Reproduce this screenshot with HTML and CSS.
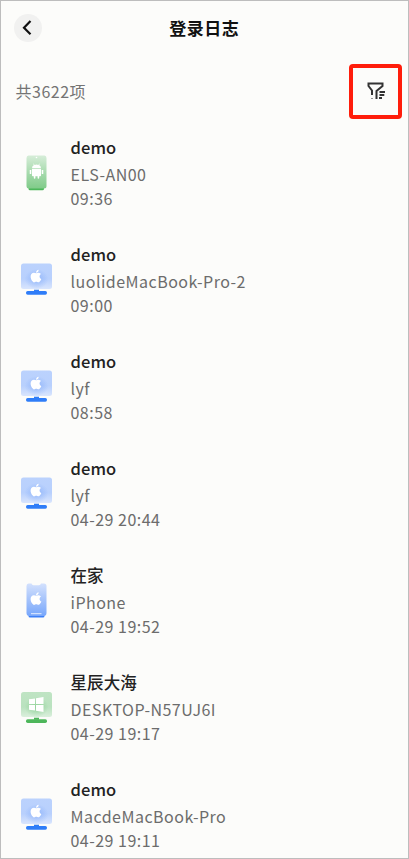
FILE: index.html
```
<!DOCTYPE html>
<html lang="zh-CN"><head><meta charset="utf-8"><title>登录日志</title><link rel="stylesheet" href="styles.css"></head>
<body>
<svg class="defs" width="0" height="0"><defs>
<linearGradient id="gb" x1="0" y1="0" x2="0" y2="1"><stop offset="0" stop-color="#bbd2fd"/><stop offset=".6" stop-color="#b8d0fd"/><stop offset="1" stop-color="#d9e5fd"/></linearGradient>
<linearGradient id="gs" x1="0" y1="0" x2="0" y2="1"><stop offset="0" stop-color="#bfe4c3"/><stop offset=".6" stop-color="#bae2bf"/><stop offset="1" stop-color="#daefdc"/></linearGradient>
<linearGradient id="gp" x1="0" y1="0" x2="0" y2="1"><stop offset="0" stop-color="#d3e1fd"/><stop offset=".5" stop-color="#a5c3fb"/><stop offset="1" stop-color="#78a7fb"/></linearGradient>
<linearGradient id="gg" x1="0" y1="0" x2="0" y2="1"><stop offset="0" stop-color="#d6edd8"/><stop offset=".5" stop-color="#a9dbaf"/><stop offset="1" stop-color="#80cb89"/></linearGradient>
<radialGradient id="glowb"><stop offset="0" stop-color="#7fa9f9" stop-opacity=".65"/><stop offset="1" stop-color="#7fa9f9" stop-opacity="0"/></radialGradient>
<radialGradient id="glowg"><stop offset="0" stop-color="#7cca85" stop-opacity=".65"/><stop offset="1" stop-color="#7cca85" stop-opacity="0"/></radialGradient>
<symbol id="apple" viewBox="0 0 24 24"><path d="M17.05 20.28c-.98.95-2.05.8-3.08.35-1.09-.46-2.09-.48-3.24 0-1.44.62-2.2.44-3.06-.35C2.79 15.25 3.51 7.59 9.05 7.31c1.35.07 2.29.74 3.08.8 1.18-.24 2.31-.93 3.57-.84 1.51.12 2.65.72 3.4 1.8-3.12 1.87-2.38 5.98.48 7.13-.57 1.5-1.31 2.99-2.54 4.09zM12.03 7.25c-.15-2.23 1.66-4.07 3.74-4.25.29 2.58-2.34 4.5-3.74 4.25z"/></symbol>
<symbol id="mac" viewBox="0 0 34 40"><rect x="2" y="5.500" width="31" height="25.500" rx="2.5" fill="url(#gb)"/><ellipse cx="17.5" cy="21" rx="12" ry="10" fill="url(#glowb)"/><path d="M15 31.700h5v2h-5z" fill="#2f7df8"/><rect x="7" y="33" width="21" height="3.8" rx="1.7" fill="#2f7df8"/><use href="#apple" x="8.500" y="9.500" width="17" height="17" fill="#fff"/></symbol>
<symbol id="windows" viewBox="0 0 34 40"><rect x="2" y="6" width="31" height="25" rx="2.5" fill="url(#gs)"/><ellipse cx="17.5" cy="21" rx="12" ry="10" fill="url(#glowg)"/><path d="M15 31.700h5v2h-5z" fill="#4db65a"/><rect x="7" y="33.200" width="21" height="3.8" rx="1.7" fill="#4db65a"/><path d="M10 13.300l6-.9V18h-6zM17 12.200l7.500-1.300V18H17zM10 19h6v5.600l-6-.9zM17 19h7.500v7L17 24.800z" fill="#fff"/></symbol>
<symbol id="iphone" viewBox="0 0 34 40"><path d="M9.500 35h16v2q0 1.500-1.500 1.500H11q-1.500 0-1.500-1.500z" fill="#3d80f7"/><path d="M9.500 4.500h3q.5 1.800 2 1.800h5.500q1.500 0 2-1.800h3q2.500 0 2.500 2.500v27q0 3-3 3h-14q-3 0-3-3V7q0-2.500 2-2.500z" fill="url(#gp)"/><path d="M12 34.700h10.500" stroke="#e6effe" stroke-width="1"/><use href="#apple" x="8.500" y="11" width="17" height="17" fill="#fff"/></symbol>
<symbol id="android" viewBox="0 0 34 40"><path d="M9.500 36h15.500v1.800q0 1.500-1.500 1.500H11q-1.500 0-1.500-1.500z" fill="#4cb75a"/><path d="M9.500 4.500h16q2 0 2 2.500v28q0 2.500-2.500 2.500H10q-2.500 0-2.500-2.500V7q0-2.500 2-2.500z" fill="url(#gg)"/><circle cx="17.500" cy="6.500" r=".8" fill="#fff"/><path d="M13 18h9v6.500q0 .8-.8.8h-1v1.700q0 .8-.8.800t-.8-.8v-1.700h-2.200v1.700q0 .8-.8.800t-.8-.8v-1.700h-1q-.8 0-.8-.8zM13 17.200q0-2.200 2-3.100l-.8-1.200.5-.3.900 1.300q1.900-.6 3.800 0l.9-1.300.5.3-.8 1.200q2 .9 2 3.100z" fill="#fff"/><path d="M11.500 19v4M23.500 19v4" stroke="#fff" stroke-width="1.500"/><path d="M15.500 15.700h.01M19.500 15.700h.01" stroke="#8fce96" stroke-width=".8"/></symbol>
</defs></svg>
<main class="screen">
<header class="bar"><span class="back"><svg width="28" height="28" viewBox="0 0 28 28"><path d="M16.500 7l-6.500 6.700 6.500 6.600"/></svg></span><h1>登录日志</h1></header>
<div class="summary"><span>共3622项</span><span class="filter"><svg width="22" height="22" viewBox="0 0 22 22"><path d="M7 14V9.500L3.500 5V2.500h14V5L11.500 10V18M7 17v.5M14.500 11h5.500M14.500 14h4.800M14 17h3"/></svg></span></div>
<ul class="list">
<li><svg class="device"><use href="#android"/></svg><div><h2>demo</h2><p>ELS-AN00</p><p>09:36</p></div></li>
<li><svg class="device"><use href="#mac"/></svg><div><h2>demo</h2><p>luolideMacBook-Pro-2</p><p>09:00</p></div></li>
<li><svg class="device"><use href="#mac"/></svg><div><h2>demo</h2><p>lyf</p><p>08:58</p></div></li>
<li><svg class="device"><use href="#mac"/></svg><div><h2>demo</h2><p>lyf</p><p>04-29 20:44</p></div></li>
<li><svg class="device"><use href="#iphone"/></svg><div><h2>在家</h2><p>iPhone</p><p>04-29 19:52</p></div></li>
<li><svg class="device"><use href="#windows"/></svg><div><h2>星辰大海</h2><p>DESKTOP-N57UJ6I</p><p>04-29 19:17</p></div></li>
<li><svg class="device"><use href="#mac"/></svg><div><h2>demo</h2><p>MacdeMacBook-Pro</p><p>04-29 19:11</p></div></li>
</ul></main></body></html>
```
FILE: styles.css
```
*{box-sizing:border-box;margin:0;padding:0}
body{font-family:"Noto Sans CJK SC",sans-serif;background:#fcfcfa;color:#222}
.defs{display:block;height:0}
.screen{height:859px;overflow:hidden;border:1px solid #bdbdbd}
.bar{display:grid;grid-template-columns:28px 1fr 28px;align-items:center;height:53px;padding:0 13px 0 12.500px}
.bar h1{font-size:17px;font-weight:700;text-align:center;line-height:24px;letter-spacing:.5px;color:#111}
.back{width:28px;height:28px;border-radius:50%;background:#f1f1f0}
.back path,.filter path{fill:none;stroke:#111;stroke-width:2.200}
.filter path{stroke:#333;stroke-width:2}
.summary{display:flex;justify-content:space-between;align-items:center;height:63px;padding:11px 6px 0 14.500px;color:#747474;font-size:16px;letter-spacing:.5px}
.filter{display:grid;place-items:center;flex:none;width:53px;height:55px;margin-top:1px;border:4px solid #ff1d0b;border-radius:4px}
.list{list-style:none}
.list li{display:flex;align-items:center;height:107.100px;padding-left:18px;gap:17.500px}
.device{width:34px;height:40px}
.list h2{font-size:16.500px;font-weight:500;line-height:30px;letter-spacing:.1px}
.list p{font-size:16px;line-height:24px;color:#6c6c6c;letter-spacing:.48px}
```
